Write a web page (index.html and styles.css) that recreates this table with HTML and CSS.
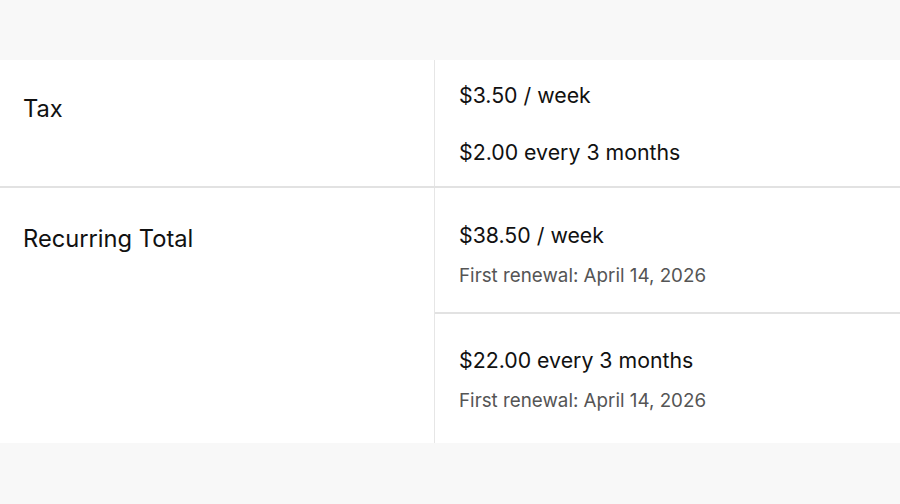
FILE: index.html
```html
<!DOCTYPE html>
<html lang="en">
<head>
    <meta charset="UTF-8">
    <meta name="viewport" content="width=device-width, initial-scale=1.0">
    <title>Order Totals</title>
    <link rel="stylesheet" href="styles.css">
</head>
<body>
    <div class="totals">
        <div class="totals-row">
            <div class="totals-label">Tax</div>
            <div class="totals-value tax-values">
                <p class="amount">$3.50 / week</p>
                <p class="amount">$2.00 every 3 months</p>
            </div>
        </div>
        <div class="totals-row">
            <div class="totals-label label-recurring">Recurring Total</div>
            <div class="totals-value">
                <div class="recurring-item first">
                    <p class="amount">$38.50 / week</p>
                    <p class="renewal">First renewal: April 14, 2026</p>
                </div>
                <div class="recurring-item">
                    <p class="amount">$22.00 every 3 months</p>
                    <p class="renewal">First renewal: April 14, 2026</p>
                </div>
            </div>
        </div>
    </div>
</body>
</html>
```

FILE: styles.css
```css
body {
    font-family: Inter, "Liberation Sans", Arial, sans-serif;
    background-color: #f8f8f8;
    margin: 0;
    padding: 60px 0 0;
    color: #111111;
}

.totals {
    background-color: #ffffff;
}

.totals-row {
    display: grid;
    grid-template-columns: 434px 1fr;
}

.totals-row + .totals-row {
    border-top: 2px solid #e2e2e2;
}

.totals-label {
    font-size: 23.7px;
    line-height: 30px;
    padding: 34px 23px;
}

.label-recurring {
    padding-top: 36px;
}

.totals-value {
    border-left: 1px solid #e6e6e6;
}

.amount {
    margin: 0;
    font-size: 21.3px;
    line-height: 30px;
}

.tax-values {
    display: flex;
    flex-direction: column;
    gap: 27px;
    padding: 20px 24px 19px;
}

.recurring-item {
    padding: 31px 24px 30px;
}

.recurring-item.first {
    border-bottom: 2px solid #e2e2e2;
    padding-top: 32px;
    padding-bottom: 24px;
}

.renewal {
    margin: 14px 0 0;
    font-size: 18.8px;
    line-height: 24px;
    color: #555555;
}
```
